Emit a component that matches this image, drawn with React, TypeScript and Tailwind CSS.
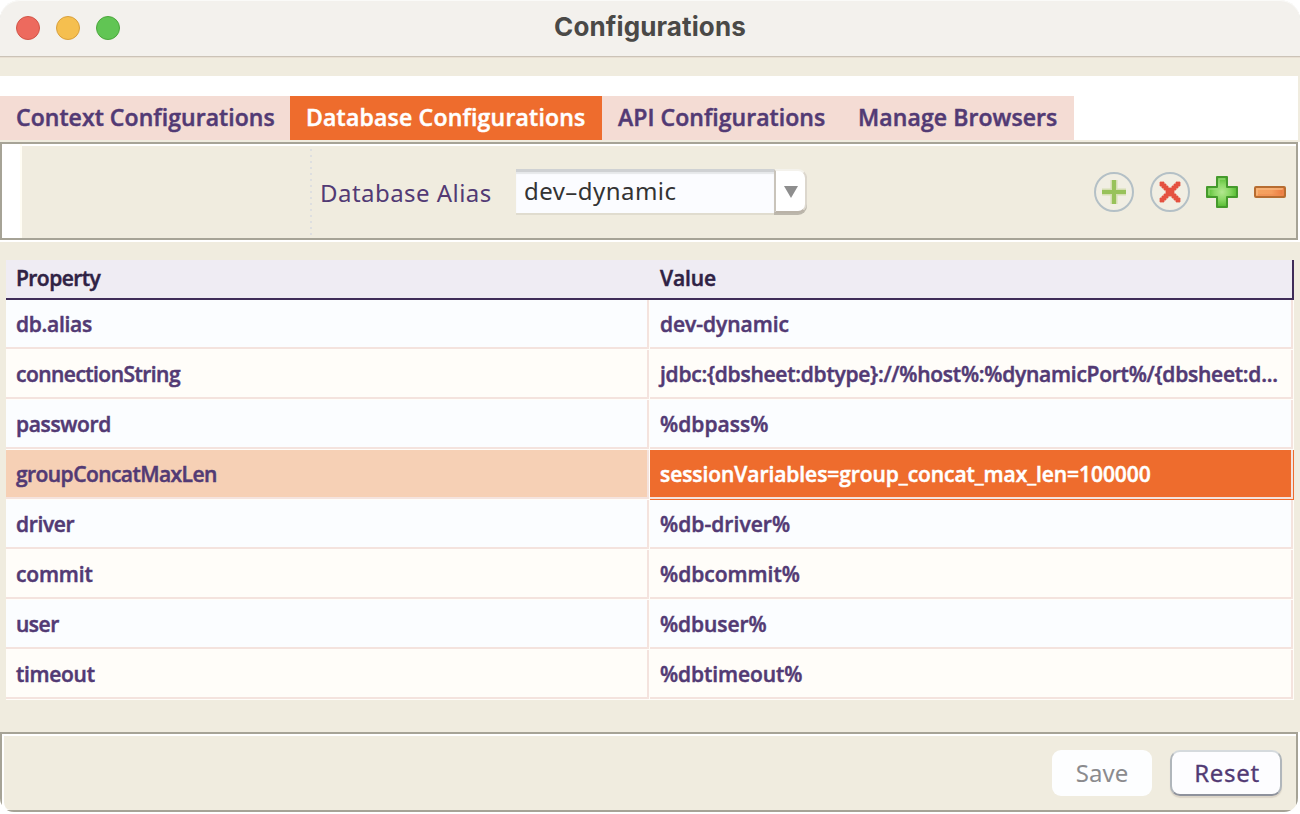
type Row = { name: string; nameCls: string; value: string; valueCls: string; selected?: boolean };

const rows: Row[] = [
  { name: "db.alias", nameCls: "tracking-[-0.28px]", value: "dev-dynamic", valueCls: "tracking-[-0.03px]" },
  {
    name: "connectionString",
    nameCls: "tracking-[-0.53px]",
    value: "jdbc:{dbsheet:dbtype}://%host%:%dynamicPort%/{dbsheet:d...",
    valueCls: "tracking-[-0.25px]",
  },
  { name: "password", nameCls: "tracking-[-0.35px]", value: "%dbpass%", valueCls: "tracking-[0.05px]" },
  {
    name: "groupConcatMaxLen",
    nameCls: "tracking-[-0.56px]",
    value: "sessionVariables=group_concat_max_len=100000",
    valueCls: "tracking-[-0.07px]",
    selected: true,
  },
  { name: "driver", nameCls: "tracking-[-0.35px]", value: "%db-driver%", valueCls: "tracking-[0.05px]" },
  { name: "commit", nameCls: "tracking-[-0.15px]", value: "%dbcommit%", valueCls: "" },
  { name: "user", nameCls: "tracking-[-0.5px]", value: "%dbuser%", valueCls: "tracking-[-0.08px]" },
  { name: "timeout", nameCls: "tracking-[-0.3px]", value: "%dbtimeout%", valueCls: "tracking-[-0.08px]" },
];

const tabs = [
  { label: "Context Configurations", cls: "w-[290px] tracking-[0.07px] bg-[#f4dcd4] text-[#523a74]" },
  { label: "Database Configurations", cls: "w-[312px] tracking-[0.21px] bg-[#ee6c2d] text-white" },
  { label: "API Configurations", cls: "w-[240px] tracking-[0.05px] bg-[#f4dcd4] text-[#523a74]" },
  { label: "Manage Browsers", cls: "w-[232px] tracking-[0.1px] bg-[#f4dcd4] text-[#523a74]" },
];

function TitleBar() {
  return (
    <header className="grid h-[58px] shrink-0 grid-cols-[1fr_auto_1fr] rounded-t-[20px] border-b border-[#e8dfd2] bg-[#f3f1ed] shadow-[inset_0_-1px_0_#cbc3b7,inset_0_1px_0_#fafaf8]">
      <div className="flex gap-4 pt-4 pl-4">
        <span className="size-6 rounded-full border border-[#d25548] bg-[#ed6a5e]" />
        <span className="size-6 rounded-full border border-[#d9a03c] bg-[#f5bf4f]" />
        <span className="size-6 rounded-full border border-[#4ba73c] bg-[#61c554]" />
      </div>
      <h1 className="pt-[7px] font-[Inter,sans-serif] text-[26px] leading-10 font-bold tracking-[0.12px] text-[#4a4947]">
        Configurations
      </h1>
    </header>
  );
}

function Tabs() {
  return (
    <nav className="mr-[2px] flex h-16 shrink-0 bg-white pt-5">
      {tabs.map((t) => (
        <div
          key={t.label}
          className={`h-11 pl-4 text-[23px] leading-[43px] font-semibold whitespace-nowrap [-webkit-text-stroke:0.5px] ${t.cls}`}
        >
          {t.label}
        </div>
      ))}
    </nav>
  );
}

function ToolbarIcons() {
  return (
    <div className="flex items-center gap-4">
      <svg width="40" height="40" viewBox="0 0 40 40">
        <circle cx="20" cy="20" r="19" fill="#f1eee3" stroke="#b4c0c6" strokeWidth="2" />
        <path d="M20 8v24M8 20h24" stroke="#d5deb2" strokeWidth="7" />
        <path d="M20 8v24M8 20h24" stroke="#98c25a" strokeWidth="4" />
      </svg>
      <svg width="40" height="40" viewBox="0 0 40 40">
        <circle cx="20" cy="20" r="19" fill="#f1eee3" stroke="#b4c0c6" strokeWidth="2" />
        <path
          d="M10 10h4v2h2v2h2v2h4v-2h2v-2h2v-2h4v4h-2v2h-2v2h-2v4h2v2h2v2h2v4h-4v-2h-2v-2h-2v-2h-4v2h-2v2h-2v2h-4v-4h2v-2h2v-2h2v-4h-2v-2h-2v-2h-2z"
          fill="#e55140"
          stroke="#e55140"
          strokeWidth="0.8"
          strokeLinejoin="round"
        />
      </svg>
      <svg width="32" height="32" viewBox="0 0 32 32">
        <defs>
          <radialGradient id="plusFill">
            <stop offset="0" stopColor="#b3e790" />
            <stop offset="0.5" stopColor="#8bd865" />
            <stop offset="1" stopColor="#55bb31" />
          </radialGradient>
        </defs>
        <path
          d="M11 1h10v10h10v10H21v10H11V21H1V11h10z"
          fill="url(#plusFill)"
          stroke="#459a2c"
          strokeWidth="2"
          strokeLinejoin="round"
        />
        <path d="M13 12V3h6M12 13H3v6" fill="none" stroke="#a0dc82" strokeWidth="1.5" opacity="0.7" />
      </svg>
      <svg width="32" height="12" viewBox="0 0 32 12">
        <defs>
          <linearGradient id="minusFill">
            <stop offset="0" stopColor="#f4a35f" />
            <stop offset="0.55" stopColor="#f59d5d" />
            <stop offset="1" stopColor="#e9743a" />
          </linearGradient>
        </defs>
        <rect x="1" y="1" width="30" height="10" rx="1" fill="url(#minusFill)" stroke="#b76d31" strokeWidth="2" />
        <path d="M3 9V3h26" fill="none" stroke="#f8b77e" strokeWidth="1.5" />
        <path d="M29 3v6H4" fill="none" stroke="#ee8a50" strokeWidth="1" />
      </svg>
    </div>
  );
}

function Toolbar() {
  return (
    <section className="mt-[2px] flex h-[100px] shrink-0 border-r-2 border-b-2 border-white">
      <div className="flex grow border-2 border-[#a6a396] pr-[10px]">
        <div className="w-5 border-r-2 border-[#fffdf4] bg-white" />
        <div className="-mr-[10px] flex grow items-center border-t-2 border-white pr-[10px]">
          <svg width="2" height="90" viewBox="0 0 2 90" className="ml-[288px]">
            <path d="M1 2v88" stroke="#dedfe0" strokeWidth="2" strokeDasharray="2 4" />
          </svg>
          <label className="ml-2 w-[196px] pt-[2px] font-['Noto_Sans',sans-serif] text-2xl tracking-[0.46px] text-[#523a74]">
            Database Alias
          </label>
          <div className="flex h-[46px] w-[292px]">
            <div className="h-11 w-[258px] border-t-[3px] border-[#cfd1d3] bg-[#fbfcff] pl-2 font-['Noto_Sans',sans-serif] text-2xl leading-[37px] tracking-[0.45px] whitespace-nowrap text-[#333] shadow-[inset_0_2px_1px_#e6e8ea,0_2px_0_#e0dccf]">
              dev–dynamic
            </div>
            <div className="flex h-11 w-[33px] items-center justify-center rounded-r-[9px] border-t-2 border-r-2 border-b-2 border-l-2 border-t-[#f4f2ec] border-r-[#dcd7cd] border-b-[#bab3a8] border-l-[#c9c4bb] bg-white pt-px shadow-[0_2px_0_#bcb7ac]">
              <svg width="14" height="12" viewBox="0 0 14 12">
                <path d="M0 0h14L7 12z" fill="#8e8e8e" />
              </svg>
            </div>
          </div>
          <div className="ml-auto">
            <ToolbarIcons />
          </div>
        </div>
      </div>
    </section>
  );
}

function PropertyTable() {
  return (
    <section className="mt-[18px] ml-[6px] w-[1288px] shrink-0 [-webkit-text-stroke:0.5px]">
      <div className="flex h-10 border-r-2 border-b-2 border-[#3f2c58] bg-[#efecf3] text-[21px] leading-[37px] font-semibold text-[#2f2244]">
        <div className="w-[644px] pl-[10px] tracking-[-0.55px]">Property</div>
        <div className="pl-[10px] tracking-[-0.1px]">Value</div>
      </div>
      {rows.map((r, i) => {
        const base = i % 2 ? "bg-[#fffdf9] text-[#523a74]" : "bg-[#fbfdff] text-[#523a74]";
        const nameBg = r.selected ? "bg-[#f6d0b5] text-[#523a74]" : base;
        const valueBg = r.selected ? "bg-[#ee6c2d] text-white" : base;
        const text = "h-[49px] w-[643px] border-r-2 border-b-2 border-[#f4e3de] pl-[10px] leading-[48px] whitespace-nowrap";
        return (
          <div key={r.name} className="flex h-[50px] text-[21px] font-semibold">
            <div className="w-[644px] bg-[#fffdf9]">
              <div className={`${text} ${nameBg} ${r.nameCls}`}>{r.name}</div>
            </div>
            <div className={r.selected ? "w-[644px] bg-[#ee6c2d]" : "w-[644px] bg-[#fffdf9]"}>
              <div className={`${text} ${valueBg} ${r.valueCls}`}>{r.value}</div>
            </div>
          </div>
        );
      })}
    </section>
  );
}

function Footer() {
  return (
    <footer className="mt-8 flex h-[82px] shrink-0 border-r-2 border-b-2 border-white bg-white">
      <div className="flex grow overflow-hidden rounded-b-[14px]">
        <div className="flex grow border-2 border-[#a6a396] bg-white">
          <div className="flex grow justify-end gap-[18px] rounded-bl-[8px] border-t-2 border-l-2 border-white bg-[#f0ecdf] pt-[14px] pr-[14px] font-['Noto_Sans',sans-serif] text-2xl">
            <button className="h-[46px] w-[100px] rounded-[9px] bg-[#fdfeff] pb-px text-[#8b8b8e]">Save</button>
            <button className="h-[46px] w-[112px] rounded-[10px] border-2 border-t-[#d5dadd] border-r-[#b0b6bb] border-b-[#8e929c] border-l-[#b0b6bb] bg-[#fdfdff] pb-px pl-[2px] tracking-[0.7px] text-[#523a74] shadow-[0_2px_1px_#dcd5c8] [-webkit-text-stroke:0.3px]">
              Reset
            </button>
          </div>
        </div>
      </div>
    </footer>
  );
}

export default function App() {
  return (
    <div className="h-[814px] w-[1300px] overflow-hidden bg-white font-['Open_Sans',sans-serif]">
      <TitleBar />
      <main className="flex h-[756px] flex-col bg-[#f0ecdf] pt-[18px]">
        <Tabs />
        <Toolbar />
        <PropertyTable />
        <Footer />
      </main>
    </div>
  );
}
